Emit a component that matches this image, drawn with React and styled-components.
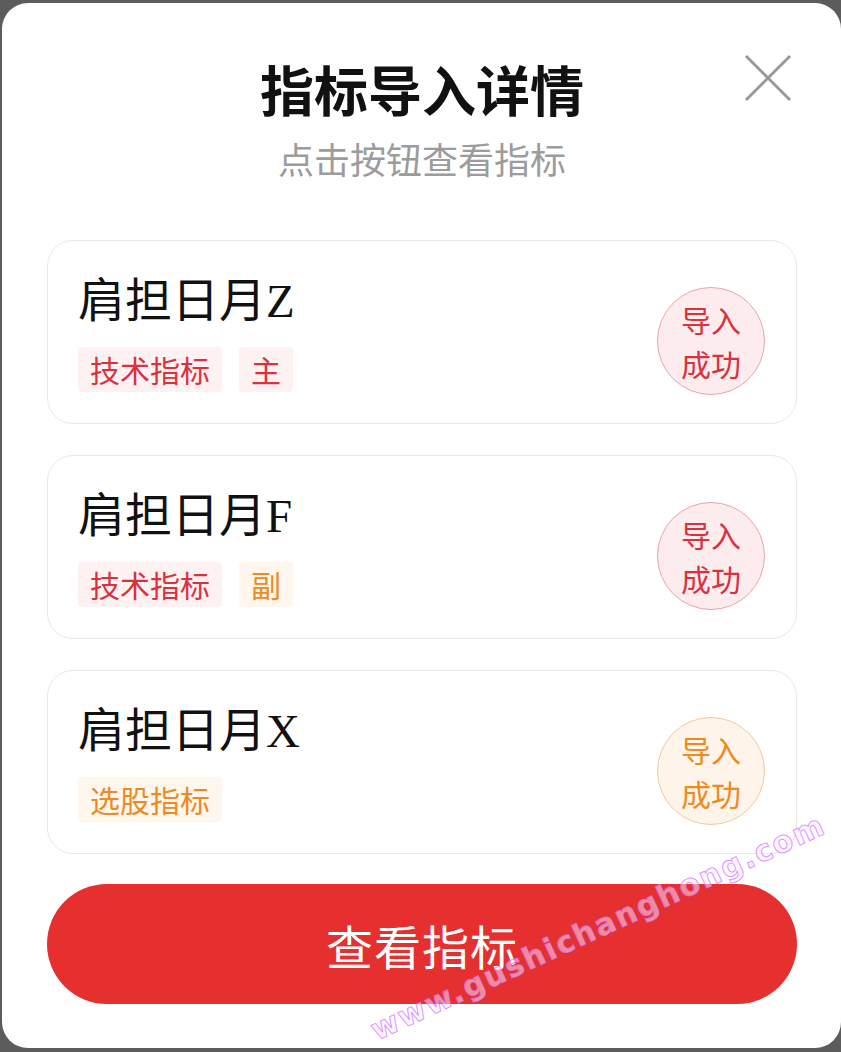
import styled, { createGlobalStyle } from "styled-components";

const GlobalStyle = createGlobalStyle`
  html, body {
    margin: 0;
    padding: 0;
    background: #5c5c5c;
  }
  body {
    font-family: "Noto Sans CJK SC", "Noto Sans", sans-serif;
  }
`;

const themes = {
  red: { text: "#d9323e", tagBg: "#fdf1f2", badgeBg: "#fdeced", badgeBorder: "#e9a3ad" },
  orange: { text: "#ee8a22", tagBg: "#fff6ed", badgeBg: "#fff4e9", badgeBorder: "#f2c89e" },
};

const indicators = [
  {
    name: "肩担日月Z",
    tags: [
      { label: "技术指标", tone: "red" },
      { label: "主", tone: "red" },
    ],
    tone: "red",
  },
  {
    name: "肩担日月F",
    tags: [
      { label: "技术指标", tone: "red" },
      { label: "副", tone: "orange" },
    ],
    tone: "red",
  },
  {
    name: "肩担日月X",
    tags: [{ label: "选股指标", tone: "orange" }],
    tone: "orange",
  },
];

const App = () => {
  return (
    <>
      <GlobalStyle />
      <Modal>
        <CloseButton aria-label="关闭">
          <svg width="48" height="48" viewBox="0 0 48 48">
            <path d="M2 2 L46 46 M46 2 L2 46" stroke="#999" strokeWidth="3" fill="none" />
          </svg>
        </CloseButton>
        <Header>
          <Title>指标导入详情</Title>
          <Subtitle>点击按钮查看指标</Subtitle>
        </Header>
        <List>
          {indicators.map((item) => (
            <Card key={item.name}>
              <Info>
                <Name>{item.name}</Name>
                <Tags>
                  {item.tags.map((tag) => (
                    <Tag key={tag.label} $tone={tag.tone}>
                      {tag.label}
                    </Tag>
                  ))}
                </Tags>
              </Info>
              <Badge $tone={item.tone}>
                导入
                <br />
                成功
              </Badge>
            </Card>
          ))}
        </List>
        <ViewButton>查看指标</ViewButton>
        <Watermark>www.gushichanghong.com</Watermark>
      </Modal>
    </>
  );
};

const Modal = styled.div`
  position: relative;
  overflow: hidden;
  box-sizing: border-box;
  margin: 3px 0 0 2px;
  width: 839px;
  height: 1045px;
  padding: 54px 44px 0 45px;
  background: #fff;
  border-radius: 26px;
  display: flex;
  flex-direction: column;
`;

const CloseButton = styled.button`
  position: absolute;
  top: 51px;
  right: 49px;
  padding: 0;
  border: none;
  background: none;
  display: flex;
`;

const Header = styled.div`
  display: flex;
  flex-direction: column;
  align-items: center;
  gap: 15px;
`;

const Title = styled.h1`
  margin: 0;
  font-size: 54px;
  line-height: 64px;
  font-weight: 700;
  color: #111;
`;

const Subtitle = styled.p`
  margin: 0;
  font-size: 36px;
  line-height: 44px;
  color: #9c9c9c;
`;

const List = styled.div`
  display: flex;
  flex-direction: column;
  gap: 31px;
  margin-top: 60px;
`;

const Card = styled.div`
  box-sizing: border-box;
  height: 184px;
  padding: 32px 31px 0 30px;
  border: 1px solid #e8e8e8;
  border-radius: 26px;
  display: flex;
  justify-content: space-between;
`;

const Info = styled.div`
  display: flex;
  flex-direction: column;
  gap: 18px;
`;

const Name = styled.div`
  font-family: "Liberation Serif", "Noto Sans CJK SC", serif;
  font-size: 47px;
  line-height: 56px;
  color: #111;
`;

const Tags = styled.div`
  display: flex;
  gap: 17px;
`;

const Tag = styled.span`
  padding: 0 12px;
  font-size: 30px;
  line-height: 45px;
  border-radius: 4px;
  color: ${({ $tone }) => themes[$tone].text};
  background: ${({ $tone }) => themes[$tone].tagBg};
`;

const Badge = styled.div`
  box-sizing: border-box;
  width: 108px;
  height: 108px;
  margin-top: 14px;
  border-radius: 50%;
  display: flex;
  align-items: center;
  justify-content: center;
  text-align: center;
  font-size: 30px;
  line-height: 44px;
  color: ${({ $tone }) => themes[$tone].text};
  background: ${({ $tone }) => themes[$tone].badgeBg};
  border: 1px solid ${({ $tone }) => themes[$tone].badgeBorder};
`;

const ViewButton = styled.button`
  margin-top: 30px;
  height: 120px;
  border: none;
  border-radius: 60px;
  background: #e62f2f;
  color: #fff;
  font-family: "Noto Sans CJK SC", sans-serif;
  font-size: 47px;
  letter-spacing: 1px;
`;

const Watermark = styled.span`
  position: absolute;
  left: 378px;
  bottom: 0;
  transform-origin: 0 100%;
  transform: rotate(-24.8deg);
  white-space: nowrap;
  font-family: "DejaVu Sans", sans-serif;
  font-weight: 700;
  font-size: 30px;
  line-height: 36px;
  letter-spacing: 2px;
  color: rgba(255, 235, 252, 0.5);
  -webkit-text-stroke: 1px rgba(205, 115, 255, 0.75);
  pointer-events: none;
`;

export default App;
